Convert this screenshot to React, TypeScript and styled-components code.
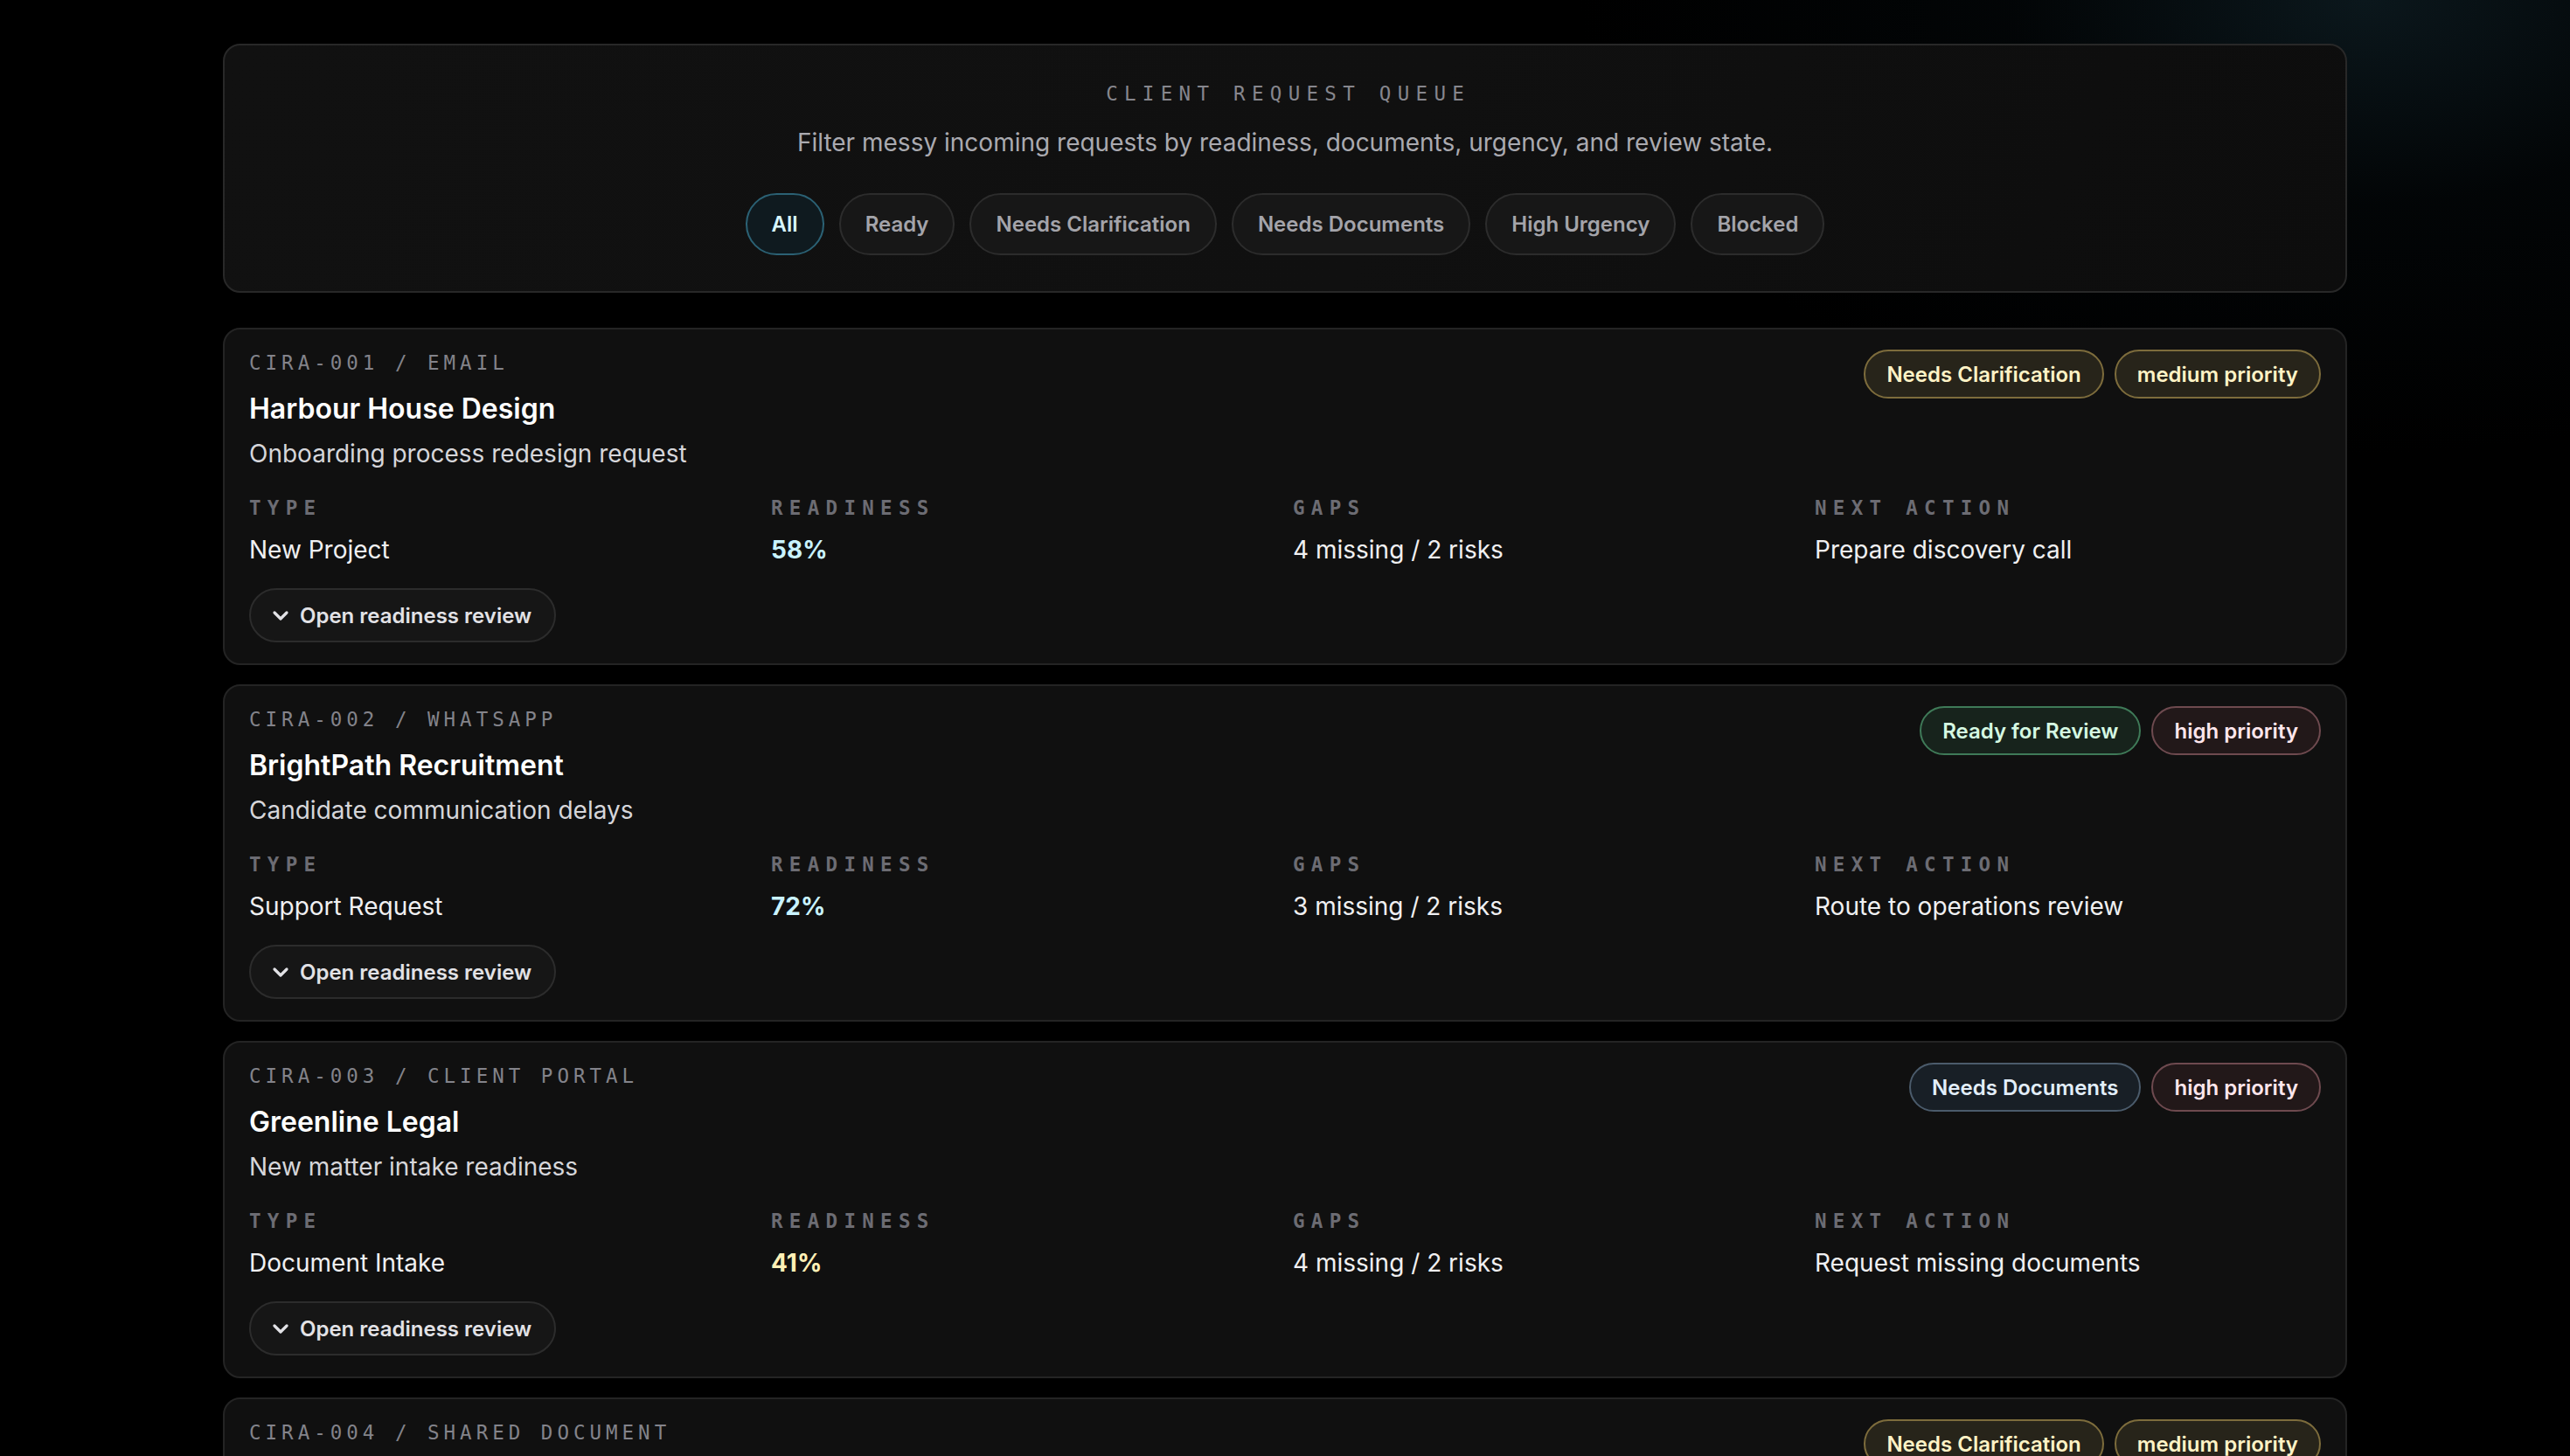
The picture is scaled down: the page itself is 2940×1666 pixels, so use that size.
import React from "react";
import styled, { createGlobalStyle } from "styled-components";

const GlobalStyle = createGlobalStyle`
  * { box-sizing: border-box; }
  html, body { margin: 0; padding: 0; }
  body {
    background-color: #000;
    background-image: radial-gradient(ellipse 900px 520px at 92% 0%, rgba(22, 46, 56, 0.5) 0%, rgba(10, 22, 28, 0.22) 45%, transparent 100%);
    background-repeat: no-repeat;
    font-family: Inter, "Noto Sans", "Liberation Sans", sans-serif;
    color: #f2f2f4;
    min-height: 100vh;
  }
`;

const mono = `"DejaVu Sans Mono", "Liberation Mono", monospace`;

const Page = styled.main`
  width: 2430px;
  margin: 0 auto;
  padding: 50px 0 60px;
  display: flex;
  flex-direction: column;
`;

const Hero = styled.section`
  border: 2px solid #282828;
  border-radius: 20px;
  background: linear-gradient(115deg, #111111 0%, #101010 55%, #0d0d0d 100%);
  padding: 42px 40px 41px;
  display: flex;
  flex-direction: column;
  align-items: center;
  margin-bottom: 40px;
`;

const Eyebrow = styled.div`
  font-family: ${mono};
  font-size: 22.5px;
  line-height: 1.2;
  letter-spacing: 7.3px;
  text-transform: uppercase;
  color: #86868d;
  padding-left: 7.3px;
`;

const Lead = styled.p`
  margin: 23px 0 0;
  font-size: 28px;
  line-height: 1.4;
  color: #aaaab0;
`;

const FilterRow = styled.div`
  margin-top: 38px;
  display: flex;
  gap: 17px;
  justify-content: center;
`;

const FilterPill = styled.button<{ $active?: boolean }>`
  height: 71px;
  padding: 0 28px;
  border-radius: 999px;
  border: 2px solid ${(p) => (p.$active ? "#2b6174" : "#2c2c2c")};
  background: ${(p) => (p.$active ? "#0f1a1f" : "#171717")};
  color: ${(p) => (p.$active ? "#d8f7ff" : "#a4a4aa")};
  font-family: Inter, "Noto Sans", sans-serif;
  font-size: 24px;
  font-weight: 600;
  cursor: pointer;
`;

const List = styled.div`
  display: flex;
  flex-direction: column;
  gap: 22px;
`;

const Card = styled.article`
  border: 2px solid #242424;
  border-radius: 20px;
  background: #101010;
  padding: 23px 28px 24px;
  display: flex;
  flex-direction: column;
`;

const CardTop = styled.div`
  display: flex;
  justify-content: space-between;
  align-items: flex-start;
  gap: 24px;
`;

const TitleBlock = styled.div`
  display: flex;
  flex-direction: column;
`;

const Meta = styled.div`
  font-family: ${mono};
  font-size: 22.5px;
  line-height: 1.2;
  letter-spacing: 5px;
  color: #83838a;
  text-transform: uppercase;
  padding-top: 2px;
`;

const Title = styled.h2`
  margin: 18px 0 0;
  font-size: 32px;
  line-height: 1.3;
  font-weight: 600;
  color: #ffffff;
`;

const Subtitle = styled.p`
  margin: 11px 0 0;
  font-size: 28px;
  line-height: 1.4;
  color: #d6d6da;
`;

const Badges = styled.div`
  display: flex;
  gap: 12px;
`;

type Tone = "gold" | "green" | "rose" | "slate";

const toneMap: Record<Tone, { bg: string; border: string; fg: string }> = {
  gold: { bg: "#27241a", border: "#7d6c3c", fg: "#fff3c6" },
  green: { bg: "#17231c", border: "#3f7a58", fg: "#d5f8e2" },
  rose: { bg: "#221819", border: "#6e4a4f", fg: "#ffe6ec" },
  slate: { bg: "#181f26", border: "#4b5b6b", fg: "#e2eef9" },
};

const Badge = styled.span<{ $tone: Tone }>`
  height: 56px;
  display: inline-flex;
  align-items: center;
  padding: 0 24px;
  border-radius: 999px;
  border: 2px solid ${(p) => toneMap[p.$tone].border};
  background: ${(p) => toneMap[p.$tone].bg};
  color: ${(p) => toneMap[p.$tone].fg};
  font-size: 24px;
  font-weight: 600;
  white-space: nowrap;
`;

const Stats = styled.dl`
  margin: 29px 0 0;
  display: grid;
  grid-template-columns: repeat(4, 1fr);
  gap: 18px;
`;

const Stat = styled.div`
  display: flex;
  flex-direction: column;
`;

const StatLabel = styled.dt`
  font-family: ${mono};
  font-size: 22.5px;
  line-height: 1.2;
  font-weight: 700;
  letter-spacing: 7.3px;
  color: #6c6c73;
  text-transform: uppercase;
`;

const StatValue = styled.dd<{ $accent?: string }>`
  margin: 15px 0 0;
  font-size: 28px;
  line-height: 1.4;
  font-weight: ${(p) => (p.$accent ? 700 : 400)};
  color: ${(p) => p.$accent ?? "#f0f0f2"};
`;

const ReviewButton = styled.button`
  margin-top: 24px;
  align-self: flex-start;
  height: 62px;
  padding: 0 26px 0 24px;
  display: inline-flex;
  align-items: center;
  gap: 12px;
  border-radius: 999px;
  border: 2px solid #2c2c2c;
  background: #161616;
  color: #e2e2e6;
  font-family: Inter, "Noto Sans", sans-serif;
  font-size: 24px;
  font-weight: 600;
  cursor: pointer;
`;

const Chevron = () => (
  <svg width="20" height="13" viewBox="0 0 20 13" fill="none" stroke="currentColor" strokeWidth="3.2" strokeLinecap="round" strokeLinejoin="round">
    <path d="M3 3l7 7 7-7" />
  </svg>
);

type Request = {
  id: string;
  channel: string;
  client: string;
  summary: string;
  status: { label: string; tone: Tone };
  priority: { label: string; tone: Tone };
  type: string;
  readiness: number;
  gaps: string;
  next: string;
};

const requests: Request[] = [
  {
    id: "CIRA-001",
    channel: "Email",
    client: "Harbour House Design",
    summary: "Onboarding process redesign request",
    status: { label: "Needs Clarification", tone: "gold" },
    priority: { label: "medium priority", tone: "gold" },
    type: "New Project",
    readiness: 58,
    gaps: "4 missing / 2 risks",
    next: "Prepare discovery call",
  },
  {
    id: "CIRA-002",
    channel: "WhatsApp",
    client: "BrightPath Recruitment",
    summary: "Candidate communication delays",
    status: { label: "Ready for Review", tone: "green" },
    priority: { label: "high priority", tone: "rose" },
    type: "Support Request",
    readiness: 72,
    gaps: "3 missing / 2 risks",
    next: "Route to operations review",
  },
  {
    id: "CIRA-003",
    channel: "Client Portal",
    client: "Greenline Legal",
    summary: "New matter intake readiness",
    status: { label: "Needs Documents", tone: "slate" },
    priority: { label: "high priority", tone: "rose" },
    type: "Document Intake",
    readiness: 41,
    gaps: "4 missing / 2 risks",
    next: "Request missing documents",
  },
  {
    id: "CIRA-004",
    channel: "Shared Document",
    client: "Northwind Property Group",
    summary: "Tenant reporting workflow update",
    status: { label: "Needs Clarification", tone: "gold" },
    priority: { label: "medium priority", tone: "gold" },
    type: "Change Request",
    readiness: 49,
    gaps: "5 missing / 1 risk",
    next: "Clarify reporting scope",
  },
];

const filters = ["All", "Ready", "Needs Clarification", "Needs Documents", "High Urgency", "Blocked"];

const readinessColor = (n: number) => (n >= 50 ? "#c9f3ff" : "#fff0b6");

export default function App() {
  return (
    <>
      <GlobalStyle />
      <Page>
        <Hero>
          <Eyebrow>Client Request Queue</Eyebrow>
          <Lead>Filter messy incoming requests by readiness, documents, urgency, and review state.</Lead>
          <FilterRow>
            {filters.map((f, i) => (
              <FilterPill key={f} $active={i === 0}>
                {f}
              </FilterPill>
            ))}
          </FilterRow>
        </Hero>
        <List>
          {requests.map((r) => (
            <Card key={r.id}>
              <CardTop>
                <TitleBlock>
                  <Meta>
                    {r.id} / {r.channel}
                  </Meta>
                  <Title>{r.client}</Title>
                  <Subtitle>{r.summary}</Subtitle>
                </TitleBlock>
                <Badges>
                  <Badge $tone={r.status.tone}>{r.status.label}</Badge>
                  <Badge $tone={r.priority.tone}>{r.priority.label}</Badge>
                </Badges>
              </CardTop>
              <Stats>
                <Stat>
                  <StatLabel>Type</StatLabel>
                  <StatValue>{r.type}</StatValue>
                </Stat>
                <Stat>
                  <StatLabel>Readiness</StatLabel>
                  <StatValue $accent={readinessColor(r.readiness)}>{r.readiness}%</StatValue>
                </Stat>
                <Stat>
                  <StatLabel>Gaps</StatLabel>
                  <StatValue>{r.gaps}</StatValue>
                </Stat>
                <Stat>
                  <StatLabel>Next Action</StatLabel>
                  <StatValue>{r.next}</StatValue>
                </Stat>
              </Stats>
              <ReviewButton>
                <Chevron />
                Open readiness review
              </ReviewButton>
            </Card>
          ))}
        </List>
      </Page>
    </>
  );
}
